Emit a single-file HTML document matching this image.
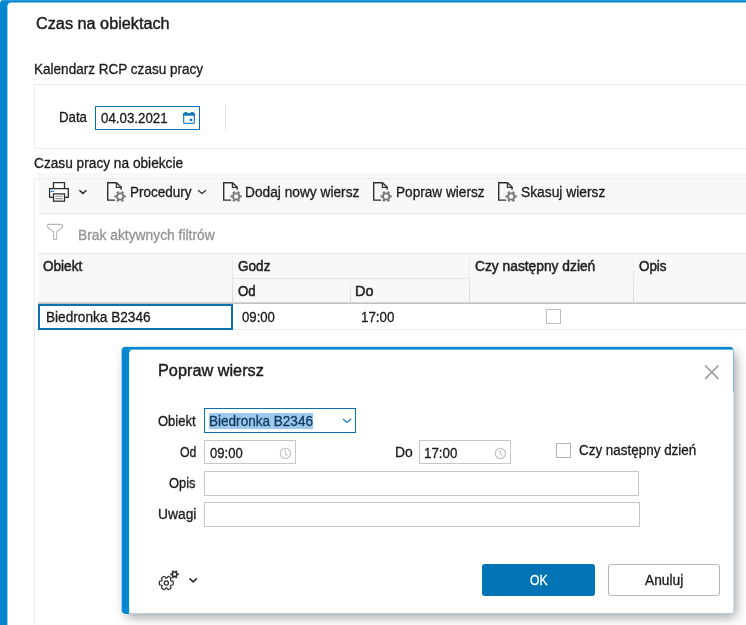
<!DOCTYPE html>
<html lang="pl">
<head>
<meta charset="utf-8">
<title>Czas na obiektach</title>
<style>
html,body{margin:0;padding:0;}
body{width:746px;height:625px;overflow:hidden;background:#fff;position:relative;
  font-family:"Liberation Sans",Arial,sans-serif;font-size:14px;color:#1a1a1a;}
.abs{position:absolute;}
.t{position:absolute;white-space:nowrap;line-height:20px;height:20px;transform-origin:0 50%;filter:grayscale(1);-webkit-text-stroke:0.3px currentColor;}
.win{position:absolute;left:0;top:0;width:760px;height:640px;background:#0487d0;border-radius:3.500px 0 0 0;}
.wintop{position:absolute;left:3px;top:0;width:760px;height:1px;background:#2b9ad9;}
.winin{position:absolute;left:7px;top:2px;width:760px;height:640px;transform:translate(0.400px,0.500px);background:#fff;border-radius:4px 0 0 0;}
.line{position:absolute;background:#e6e6e6;}
.inp{position:absolute;box-sizing:border-box;border:1px solid #c6c6c6;background:#fff;}
.inp.focus{border-color:#0b70b2;}
.hdr{position:absolute;background:#f9f8f7;}
.h{font-weight:normal;color:#222;font-size:14px;-webkit-text-stroke:0.5px #222;}
/*FIT-BEGIN*/
#t_title{left:36.20px;top:14px;transform:scaleX(1.0153);}
#t_kal{left:33.53px;top:59px;transform:scaleX(0.9672);}
#t_data{left:59.06px;top:107px;transform:scaleX(0.9448);}
#t_date{left:100.60px;top:108px;transform:scaleX(0.9514);}
#t_czasu{left:34.00px;top:153px;transform:scaleX(0.9776);}
#t_proc{left:129.53px;top:182px;transform:scaleX(0.9651);}
#t_dodaj{left:245.22px;top:182px;transform:scaleX(0.9800);}
#t_popraw{left:395.73px;top:182px;transform:scaleX(0.9733);}
#t_skasuj{left:520.51px;top:182px;transform:scaleX(0.9857);}
#t_brak{left:78.01px;top:225px;transform:scaleX(0.9870);}
#t_hobiekt{left:42.60px;top:256px;transform:scaleX(0.9683);}
#t_hgodz{left:237.50px;top:256px;transform:scaleX(0.9697);}
#t_hod{left:237.50px;top:281px;transform:scaleX(0.9444);}
#t_hdo{left:355.17px;top:281px;transform:scaleX(1.0294);}
#t_hczy{left:474.90px;top:256px;transform:scaleX(0.9844);}
#t_hopis{left:638.90px;top:256px;transform:scaleX(0.9552);}
#t_bied{left:46.03px;top:307px;transform:scaleX(0.9736);}
#t_r09{left:242.40px;top:307px;transform:scaleX(0.9400);}
#t_r17{left:360.65px;top:307px;transform:scaleX(0.9529);}
#t_dtitle{left:158.08px;top:361px;transform:scaleX(1.0175);}
#t_lobiekt{left:157.60px;top:411px;transform:scaleX(0.9293);}
#t_cbied{left:208.83px;top:411px;transform:scaleX(0.9679);}
#t_lod{left:179.80px;top:442px;transform:scaleX(0.8778);}
#t_i09{left:209.80px;top:443px;transform:scaleX(0.9314);}
#t_ldo{left:394.51px;top:442px;transform:scaleX(0.9937);}
#t_i17{left:424.25px;top:443px;transform:scaleX(0.9529);}
#t_lczy{left:579.30px;top:440px;transform:scaleX(0.9598);}
#t_lopis{left:168.80px;top:473px;transform:scaleX(0.9207);}
#t_luwagi{left:157.91px;top:504px;transform:scaleX(0.9865);}
#t_ok{left:530.20px;top:570px;transform:scaleX(0.8700);}
#t_anuluj{left:645.30px;top:570px;transform:scaleX(0.9842);}
/*FIT-END*/
</style>
</head>
<body>
<div class="win"><div class="wintop"></div><div class="winin"></div></div>

<!-- window title -->
<div class="t" id="t_title" style="font-size:16px;-webkit-text-stroke-width:0.4px;">Czas na obiektach</div>

<!-- section 1 -->
<div class="t" id="t_kal">Kalendarz RCP czasu pracy</div>
<div class="line" style="left:34px;top:84px;width:712px;height:1px;background:#ededed;"></div>
<div class="line" style="left:34px;top:84px;width:1px;height:65px;background:#ededed;"></div>
<div class="line" style="left:34px;top:148px;width:712px;height:1px;background:#ededed;"></div>
<div class="t" id="t_data">Data</div>
<div class="inp focus" style="left:95px;top:106px;width:105px;height:24px;"></div>
<div class="t" id="t_date">04.03.2021</div>
<svg class="abs" style="left:183px;top:112px;" width="12" height="12" viewBox="0 0 12 12">
  <rect x="0.650" y="1.700" width="10.700" height="9.650" rx="0.800" fill="none" stroke="#2a86c6" stroke-width="1.300"/>
  <rect x="0" y="1.100" width="12" height="2.700" rx="0.500" fill="#1578bc"/>
  <rect x="1.400" y="0" width="2.800" height="2" rx="0.600" fill="#1578bc"/>
  <rect x="7.800" y="0" width="2.800" height="2" rx="0.600" fill="#1578bc"/>
  <rect x="6.700" y="6.700" width="2.500" height="2.400" fill="#1578bc"/>
</svg>
<div class="line" style="left:225px;top:105px;width:1px;height:25px;background:#dedede;"></div>

<!-- section 2 -->
<div class="t" id="t_czasu">Czasu pracy na obiekcie</div>
<div class="line" style="left:34px;top:178px;width:1px;height:447px;background:#ededed;"></div>
<div class="line" style="left:34px;top:178px;width:4px;height:1px;background:#ededed;"></div>
<div class="hdr" style="left:38px;top:173px;width:708px;height:41px;border-bottom:1px solid #e6e6e6;box-sizing:border-box;"></div>
<div class="line" style="left:38px;top:178px;width:708px;height:1px;background:#f0efee;"></div>

<!-- toolbar icons -->
<svg class="abs" id="ic_print" style="left:48px;top:181px;" width="22" height="22" viewBox="0 0 22 22" fill="none" stroke="#2e2e2e" stroke-width="1.3">
  <path d="M5.500 7.600v-6h11v6" fill="#fff"/>
  <rect x="1.600" y="7.600" width="18.700" height="8.700" fill="#fff"/>
  <rect x="5.500" y="12.900" width="11" height="7.300" fill="#fff"/>
  <path d="M7.300 15.200h7.500M7.300 17.600h7.500" stroke="#8a8a8a" stroke-width="1.100"/>
  <path d="M3 10.400h3" stroke="#1a86d6" stroke-width="1.300"/>
</svg>
<svg class="abs" style="left:78px;top:188px;" width="10" height="7" viewBox="0 0 10 7" fill="none" stroke="#2b2b2b" stroke-width="1.500"><path d="M1.400 2.300l3.500 3.100l3.500-3.100"/></svg>

<svg class="abs docgear" style="left:106px;top:181px;" width="22" height="22" viewBox="0 0 22 22"><g fill="none"><path d="M9 19.100h-7.300v-17.400h8.700l4.700 4.300v2.700" stroke="#2e2e2e" stroke-width="1.400"/>
      <path d="M10.400 1.700v4.600h4.700" stroke="#2e2e2e" stroke-width="1.200"/>
      <circle cx="14.15" cy="15.45" r="3.150" stroke="#777" stroke-width="1.800"/>
      <path d="M18.05 15.45L19.75 15.45M16.10 18.83L16.95 20.30M12.20 18.83L11.35 20.30M10.25 15.45L8.55 15.45M12.20 12.07L11.35 10.60M16.10 12.07L16.95 10.60" stroke="#777" stroke-width="2.300"/></g></svg>
<div class="t" id="t_proc">Procedury</div>
<svg class="abs" style="left:197px;top:189px;" width="10" height="6" viewBox="0 0 10 6" fill="none" stroke="#2b2b2b" stroke-width="1.200"><path d="M1 1.200l4 3.300l4-3.300"/></svg>

<svg class="abs docgear" style="left:222px;top:181px;" width="22" height="22" viewBox="0 0 22 22"><g fill="none"><path d="M9 19.100h-7.300v-17.400h8.700l4.700 4.300v2.700" stroke="#2e2e2e" stroke-width="1.400"/>
      <path d="M10.400 1.700v4.600h4.700" stroke="#2e2e2e" stroke-width="1.200"/>
      <circle cx="14.15" cy="15.45" r="3.150" stroke="#777" stroke-width="1.800"/>
      <path d="M18.05 15.45L19.75 15.45M16.10 18.83L16.95 20.30M12.20 18.83L11.35 20.30M10.25 15.45L8.55 15.45M12.20 12.07L11.35 10.60M16.10 12.07L16.95 10.60" stroke="#777" stroke-width="2.300"/></g></svg>
<div class="t" id="t_dodaj">Dodaj nowy wiersz</div>

<svg class="abs docgear" style="left:372px;top:181px;" width="22" height="22" viewBox="0 0 22 22"><g fill="none"><path d="M9 19.100h-7.300v-17.400h8.700l4.700 4.300v2.700" stroke="#2e2e2e" stroke-width="1.400"/>
      <path d="M10.400 1.700v4.600h4.700" stroke="#2e2e2e" stroke-width="1.200"/>
      <circle cx="14.15" cy="15.45" r="3.150" stroke="#777" stroke-width="1.800"/>
      <path d="M18.05 15.45L19.75 15.45M16.10 18.83L16.95 20.30M12.20 18.83L11.35 20.30M10.25 15.45L8.55 15.45M12.20 12.07L11.35 10.60M16.10 12.07L16.95 10.60" stroke="#777" stroke-width="2.300"/></g></svg>
<div class="t" id="t_popraw">Popraw wiersz</div>

<svg class="abs docgear" style="left:497px;top:181px;" width="22" height="22" viewBox="0 0 22 22"><g fill="none"><path d="M9 19.100h-7.300v-17.400h8.700l4.700 4.300v2.700" stroke="#2e2e2e" stroke-width="1.400"/>
      <path d="M10.400 1.700v4.600h4.700" stroke="#2e2e2e" stroke-width="1.200"/>
      <circle cx="14.15" cy="15.45" r="3.150" stroke="#777" stroke-width="1.800"/>
      <path d="M18.05 15.45L19.75 15.45M16.10 18.83L16.95 20.30M12.20 18.83L11.35 20.30M10.25 15.45L8.55 15.45M12.20 12.07L11.35 10.60M16.10 12.07L16.95 10.60" stroke="#777" stroke-width="2.300"/></g></svg>
<div class="t" id="t_skasuj">Skasuj wiersz</div>



<!-- filter row -->
<svg class="abs" style="left:46px;top:223px;" width="18" height="18" viewBox="0 0 18 18" fill="none" stroke="#b7b7b7" stroke-width="1.100"><path d="M3 1.400H15.200Q16.600 1.400 16.600 2.800V4.200L10.700 8.800V15.400Q10.700 16.400 9.700 16.400H8.500Q7.500 16.400 7.500 15.400V8.800L1.600 4.200V2.800Q1.600 1.400 3 1.400Z"/></svg>
<div class="t" id="t_brak" style="color:#939393;">Brak aktywnych filtrów</div>

<!-- grid header -->
<div class="hdr" style="left:38px;top:254px;width:708px;height:48px;"></div>
<div class="line" style="left:38px;top:253px;width:708px;height:1px;background:#e6e6e6;"></div>
<div class="line" style="left:232px;top:254px;width:1px;height:48px;background:linear-gradient(to bottom,rgba(218,218,218,0.15),#d9d9d9);"></div>
<div class="line" style="left:469px;top:254px;width:1px;height:48px;background:linear-gradient(to bottom,rgba(218,218,218,0.15),#d9d9d9);"></div>
<div class="line" style="left:633px;top:254px;width:1px;height:48px;background:linear-gradient(to bottom,rgba(218,218,218,0.15),#d9d9d9);"></div>
<div class="line" style="left:233px;top:278px;width:236px;height:1px;background:#e7e7e7;"></div>
<div class="line" style="left:350px;top:279px;width:1px;height:23px;background:linear-gradient(to bottom,rgba(218,218,218,0.15),#d9d9d9);"></div>
<div class="line" style="left:38px;top:302px;width:708px;height:1px;background:#d6d6d6;"></div><div class="line" style="left:38px;top:303px;width:708px;height:1px;background:#c2c2c2;"></div>
<div class="t h" id="t_hobiekt">Obiekt</div>
<div class="t h" id="t_hgodz">Godz</div>
<div class="t h" id="t_hod">Od</div>
<div class="t h" id="t_hdo">Do</div>
<div class="t h" id="t_hczy">Czy następny dzień</div>
<div class="t h" id="t_hopis">Opis</div>

<!-- data row -->
<div class="line" style="left:38px;top:329px;width:708px;height:1px;background:#ececec;"></div>
<div class="abs" style="left:37.500px;top:304px;width:195.500px;height:25.800px;box-sizing:border-box;border:2px solid #0b70b2;"></div>
<div class="t" id="t_bied">Biedronka B2346</div>
<div class="t" id="t_r09">09:00</div>
<div class="t" id="t_r17">17:00</div>
<div class="abs" style="left:546px;top:309px;width:15px;height:15px;box-sizing:border-box;border:1px solid #bdbdbd;background:#fff;"></div>

<!-- dialog -->
<div class="abs" id="dlgsh" style="left:123px;top:349px;width:610px;height:264px;background:#fff;border-radius:4px;box-shadow:3px 4px 12px rgba(0,0,0,.38);"></div>
<svg class="abs" id="dlg" style="left:118px;top:344px;" width="620" height="274" viewBox="0 0 620 274">
  <clipPath id="dc"><rect x="3.40" y="2.70" width="612.60" height="267.30" rx="4.500" ry="4.500"/></clipPath>
  <g clip-path="url(#dc)">
    <rect x="0" y="0" width="620" height="274" fill="#fff"/>
    <rect x="3.40" y="2.70" width="7.7" height="267.30" fill="#0487d0"/>
    <rect x="3.40" y="2.70" width="612.60" height="2.9" fill="#0487d0"/>
    <path d="M11.10 5.60h4.200a4.200 4.200 0 0 0 -4.200 4.200z" fill="#0487d0"/>
    <rect x="615.00" y="5.60" width="1" height="43" fill="#7dbbe4"/>
    <rect x="615.00" y="48.60" width="1" height="267.30" fill="#cfe0ec"/>
    <rect x="11.10" y="269.00" width="612.60" height="1" fill="#b4cfe2"/>
  </g>
</svg>
<div class="t" id="t_dtitle" style="font-size:16px;-webkit-text-stroke-width:0.38px;">Popraw wiersz</div>
<svg class="abs" style="left:704px;top:364px;" width="16" height="16" viewBox="0 0 16 16" fill="none" stroke="#9e9e9e" stroke-width="1.700"><path d="M1.200 1.500l13.300 13.300M14.500 1.500l-13.300 13.300"/></svg>

<div class="t" id="t_lobiekt">Obiekt</div>
<div class="inp focus" style="left:204px;top:408px;width:152px;height:25px;"></div>
<div class="abs" style="left:209px;top:413px;width:104px;height:16px;background:#9dc9ef;"></div>
<div class="t" id="t_cbied" style="color:#10375a;filter:none;">Biedronka B2346</div>
<svg class="abs" style="left:342px;top:417.500px;" width="10" height="6" viewBox="0 0 10 6" fill="none" stroke="#1a7cc0" stroke-width="1.300"><path d="M1 1l4 3.500l4-3.500"/></svg>

<div class="t" id="t_lod">Od</div>
<div class="inp" style="left:204px;top:440px;width:92px;height:24px;"></div>
<div class="t" id="t_i09">09:00</div>
<svg class="abs" style="left:279px;top:446.500px;" width="13" height="13" viewBox="0 0 13 13" fill="none" stroke="#c3c3c3" stroke-width="1.200"><circle cx="6.400" cy="6.400" r="5.100"/><path d="M6.400 3v3.500l2 2.100"/></svg>

<div class="t" id="t_ldo">Do</div>
<div class="inp" style="left:419px;top:440px;width:92px;height:24px;"></div>
<div class="t" id="t_i17">17:00</div>
<svg class="abs" style="left:494px;top:446.500px;" width="13" height="13" viewBox="0 0 13 13" fill="none" stroke="#c3c3c3" stroke-width="1.200"><circle cx="6.400" cy="6.400" r="5.100"/><path d="M6.400 3v3.500l2 2.100"/></svg>

<div class="abs" style="left:556px;top:443px;width:15px;height:15px;box-sizing:border-box;border:1px solid #b5b5b5;background:#fff;"></div>
<div class="t" id="t_lczy">Czy następny dzień</div>

<div class="t" id="t_lopis">Opis</div>
<div class="inp" style="left:204px;top:471px;width:435px;height:25px;"></div>
<div class="t" id="t_luwagi">Uwagi</div>
<div class="inp" style="left:204px;top:502px;width:436px;height:25px;"></div>

<svg class="abs" id="ic_gears" style="left:158px;top:568px;" width="24" height="24" viewBox="0 0 24 24" fill="none" stroke="#2b2b2b" stroke-width="1.200" stroke-linejoin="round">
  <path d="M13.21 13.01L15.06 13.19A7.0 7.0 0 0 1 15.06 16.81L13.21 16.99A1.1 1.1 0 0 0 12.48 18.26L13.25 19.95A7.0 7.0 0 0 1 10.11 21.76L9.04 20.25A1.1 1.1 0 0 0 7.56 20.25L6.49 21.76A7.0 7.0 0 0 1 3.35 19.95L4.12 18.26A1.1 1.1 0 0 0 3.39 16.99L1.54 16.81A7.0 7.0 0 0 1 1.54 13.19L3.39 13.01A1.1 1.1 0 0 0 4.12 11.74L3.35 10.05A7.0 7.0 0 0 1 6.49 8.24L7.56 9.75A1.1 1.1 0 0 0 9.04 9.75L10.11 8.24A7.0 7.0 0 0 1 13.25 10.05L12.48 11.74A1.1 1.1 0 0 0 13.21 13.01Z"/>
  <circle cx="8.3" cy="15.0" r="2.100"/>
  <circle cx="16.6" cy="6.35" r="2.200" stroke-width="1.400"/>
  <path d="M19.10 6.35L20.80 6.35M17.85 8.52L18.70 9.99M15.35 8.52L14.50 9.99M14.10 6.35L12.40 6.35M15.35 4.18L14.50 2.71M17.85 4.18L18.70 2.71" stroke-width="2"/>
</svg>
<svg class="abs" style="left:188px;top:577px;" width="11" height="7" viewBox="0 0 11 7" fill="none" stroke="#2b2b2b" stroke-width="1.500"><path d="M1.500 1.400l3.700 3.500l3.700-3.500"/></svg>

<div class="abs" style="left:482.200px;top:564.200px;width:112.800px;height:31.800px;background:#0273b4;border-radius:3px;"></div>
<div class="t" id="t_ok" style="color:#fff;">OK</div>
<div class="abs" style="left:607.500px;top:564.200px;width:112.500px;height:31.800px;box-sizing:border-box;background:#fff;border:1px solid #b4b4b4;border-radius:3px;"></div>
<div class="t" id="t_anuluj">Anuluj</div>

</body>
</html>
